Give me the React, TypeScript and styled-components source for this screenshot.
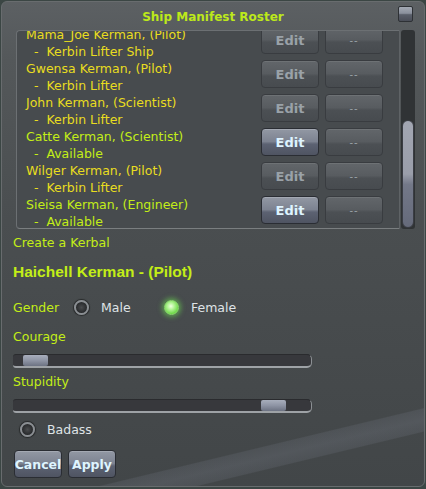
import React from 'react'
import styled, { createGlobalStyle, css } from 'styled-components'

const GlobalStyle = createGlobalStyle`
  html, body {
    margin: 0;
    padding: 0;
    background: #3b4644;
  }
  body {
    font-family: 'DejaVu Sans', 'Liberation Sans', sans-serif;
  }
`

const crew = [
  { name: 'Mama_Joe Kerman, (Pilot)', status: 'Kerbin Lifter Ship', available: false },
  { name: 'Gwensa Kerman, (Pilot)', status: 'Kerbin Lifter', available: false },
  { name: 'John Kerman, (Scientist)', status: 'Kerbin Lifter', available: false },
  { name: 'Catte Kerman, (Scientist)', status: 'Available', available: true },
  { name: 'Wilger Kerman, (Pilot)', status: 'Kerbin Lifter', available: false },
  { name: 'Sieisa Kerman, (Engineer)', status: 'Available', available: true },
]

const YELLOW = '#e9dd1f'
const LIME = '#c3ee17'

const Window = styled.div`
  width: 424px;
  height: 486px;
  margin: 1px 0 0 1px;
  border-radius: 6px;
  box-sizing: border-box;
  border: 1px solid #686c6e;
  display: flex;
  flex-direction: column;
  overflow: hidden;
  background:
    linear-gradient(166.5deg, transparent 86.6%, rgba(150, 156, 175, 0.13) 86.8%, rgba(160, 166, 185, 0.17) 88.7%, rgba(150, 156, 175, 0.13) 90.6%, transparent 90.8%),
    linear-gradient(180deg, #5c6063 0%, #54585a 12%, #4a4e50 45%, #424648 100%);
`

const TitleBar = styled.div`
  height: 28px;
  display: grid;
  grid-template-columns: 1fr auto 1fr;
  align-items: center;
`

const Title = styled.div`
  grid-column: 2;
  color: #bde91a;
  font-weight: bold;
  font-size: 12px;
  padding-top: 2px;
`

const CloseButton = styled.div`
  justify-self: end;
  align-self: start;
  margin: 4px 11px 0 0;
  width: 15px;
  height: 16px;
  box-sizing: border-box;
  border: 1px solid #2e3135;
  border-radius: 2px;
  background: linear-gradient(180deg, #a4aab4 0%, #8a909c 45%, #5a5f6a 55%, #4a4e58 100%);
`

const ListFrame = styled.div`
  display: flex;
  margin-left: 14px;
  height: 199px;
`

const ScrollBox = styled.div`
  width: 384px;
  box-sizing: border-box;
  border: 1px solid #5f6366;
  border-top-color: #6c7073;
  border-left-color: #6c7073;
  border-bottom-color: #7a7e80;
  border-radius: 4px 0 0 4px;
  background: #474b4e;
  overflow: hidden;
`

const ScrollContent = styled.div<{ $offset: number }>`
  margin-top: ${(p) => -p.$offset}px;
  padding-left: 9px;
`

const Row = styled.div`
  height: 34px;
  display: flex;
  align-items: flex-start;
`

const Info = styled.div`
  flex: 1;
  font-size: 12.5px;
  line-height: 17px;
  white-space: pre;
`

const Line = styled.div<{ $available: boolean }>`
  color: ${(p) => (p.$available ? LIME : YELLOW)};
`

const KspButton = styled.div<{ $active?: boolean }>`
  width: 58px;
  height: 28px;
  box-sizing: border-box;
  border-radius: 4px;
  display: flex;
  align-items: center;
  justify-content: center;
  font-weight: bold;
  font-size: 13px;
  ${(p) =>
    p.$active
      ? css`
          border: 1px solid #2a2d33;
          color: #def4ff;
          background: linear-gradient(180deg, #9298a4 0%, #7d8391 48%, #5c6272 58%, #4f5462 100%);
          box-shadow: inset 0 1px 0 rgba(255, 255, 255, 0.18);
        `
      : css`
          border: 1px solid #393c40;
          color: #9aa2a8;
          background: linear-gradient(180deg, #62666a 0%, #585c60 48%, #4c5054 58%, #474b4f 100%);
          box-shadow: inset 0 1px 0 rgba(255, 255, 255, 0.08);
        `}
`

const RowButton = styled(KspButton)`
  margin-right: 6px;
`

const DashButton = styled(KspButton)`
  font-size: 10px;
  font-weight: normal;
  margin-right: 16px;
  letter-spacing: 1px;
`

const ScrollTrack = styled.div`
  width: 14px;
  margin-left: 1px;
  background: #303335;
  border-radius: 3px;
  display: flex;
  flex-direction: column;
  justify-content: flex-end;
  padding: 0 1px 1px;
  box-sizing: border-box;
`

const ScrollThumb = styled.div`
  height: 108px;
  border-radius: 6px;
  background: linear-gradient(180deg, #a2a6b2 0%, #9a9eaa 50%, #737888 60%, #656a7a 100%);
  border: 1px solid #3a3d44;
  box-sizing: border-box;
`

const Form = styled.div`
  padding-left: 11px;
  display: flex;
  flex-direction: column;
`

const SmallLabel = styled.div<{ $mt: number }>`
  margin-top: ${(p) => p.$mt}px;
  color: ${LIME};
  font-size: 12.5px;
  line-height: 16px;
`

const KerbalName = styled.div`
  margin-top: 12px;
  color: ${LIME};
  font-family: 'Liberation Sans', Arial, sans-serif;
  font-weight: bold;
  font-size: 15.5px;
  line-height: 18px;
`

const GenderRow = styled.div`
  margin-top: 17px;
  display: flex;
  align-items: center;
  height: 18px;
`

const GenderLabel = styled.div`
  color: ${LIME};
  font-size: 12.5px;
  width: 61px;
`

const Option = styled.div<{ $width?: number }>`
  display: flex;
  align-items: center;
  width: ${(p) => (p.$width ? `${p.$width}px` : 'auto')};
  color: #dfe3e6;
  font-size: 12.5px;
`

const Radio = styled.div<{ $on?: boolean }>`
  width: 15px;
  height: 15px;
  border-radius: 50%;
  box-sizing: border-box;
  margin-right: 12px;
  ${(p) =>
    p.$on
      ? css`
          background: radial-gradient(circle at 45% 40%, #f0ffe0 0%, #b6f59a 30%, #6fd84a 70%, #4ca52c 100%);
          border: 1px solid #8ee070;
          box-shadow: 0 0 5px 2px rgba(110, 230, 80, 0.55);
        `
      : css`
          background: radial-gradient(circle at 50% 50%, #4a4c4e 0%, #2c2e30 60%, #1e2022 100%);
          border: 2px solid #8a8e92;
          box-shadow: 0 0 1px 1px rgba(0, 0, 0, 0.45);
        `}
`

const Slider = styled.div<{ $mt: number }>`
  margin-top: ${(p) => p.$mt}px;
  width: 299px;
  height: 14px;
  box-sizing: border-box;
  border-radius: 3px 5px 5px 3px;
  background: #37383c;
  border-top: 1px solid #2a2b2e;
  border-bottom: 2px solid #9ea2a6;
  border-right: 1px solid #8c9094;
  display: flex;
  align-items: center;
`

const SliderThumb = styled.div<{ $left: number }>`
  margin-left: ${(p) => p.$left}px;
  width: 25px;
  height: 11px;
  border-radius: 2px;
  background: linear-gradient(180deg, #a8aebc 0%, #8e94a4 50%, #6c7282 100%);
`

const BadassRow = styled(Option)`
  margin: 7px 0 0 7px;
  height: 18px;
`

const Footer = styled.div`
  margin-top: 12px;
  display: flex;
  gap: 6px;
  margin-left: 1px;
`

const FooterButton = styled(KspButton)`
  width: 48px;
  font-size: 12.5px;
`

export default function App() {
  return (
    <>
      <GlobalStyle />
      <Window>
        <TitleBar>
          <Title>Ship Manifest Roster</Title>
          <CloseButton />
        </TitleBar>
        <ListFrame>
          <ScrollBox>
            <ScrollContent $offset={5}>
              {crew.map((k) => (
                <Row key={k.name}>
                  <Info>
                    <Line $available={k.available}>{k.name}</Line>
                    <Line $available={k.available}>{'  -  ' + k.status}</Line>
                  </Info>
                  <RowButton $active={k.available}>Edit</RowButton>
                  <DashButton>--</DashButton>
                </Row>
              ))}
            </ScrollContent>
          </ScrollBox>
          <ScrollTrack>
            <ScrollThumb />
          </ScrollTrack>
        </ListFrame>
        <Form>
          <SmallLabel $mt={6}>Create a Kerbal</SmallLabel>
          <KerbalName>Haichell Kerman - (Pilot)</KerbalName>
          <GenderRow>
            <GenderLabel>Gender</GenderLabel>
            <Option $width={90}>
              <Radio />
              Male
            </Option>
            <Option>
              <Radio $on />
              Female
            </Option>
          </GenderRow>
          <SmallLabel $mt={13}>Courage</SmallLabel>
          <Slider $mt={9}>
            <SliderThumb $left={10} />
          </Slider>
          <SmallLabel $mt={6}>Stupidity</SmallLabel>
          <Slider $mt={9}>
            <SliderThumb $left={248} />
          </Slider>
          <BadassRow>
            <Radio />
            Badass
          </BadassRow>
          <Footer>
            <FooterButton $active>Cancel</FooterButton>
            <FooterButton $active>Apply</FooterButton>
          </Footer>
        </Form>
      </Window>
    </>
  )
}
